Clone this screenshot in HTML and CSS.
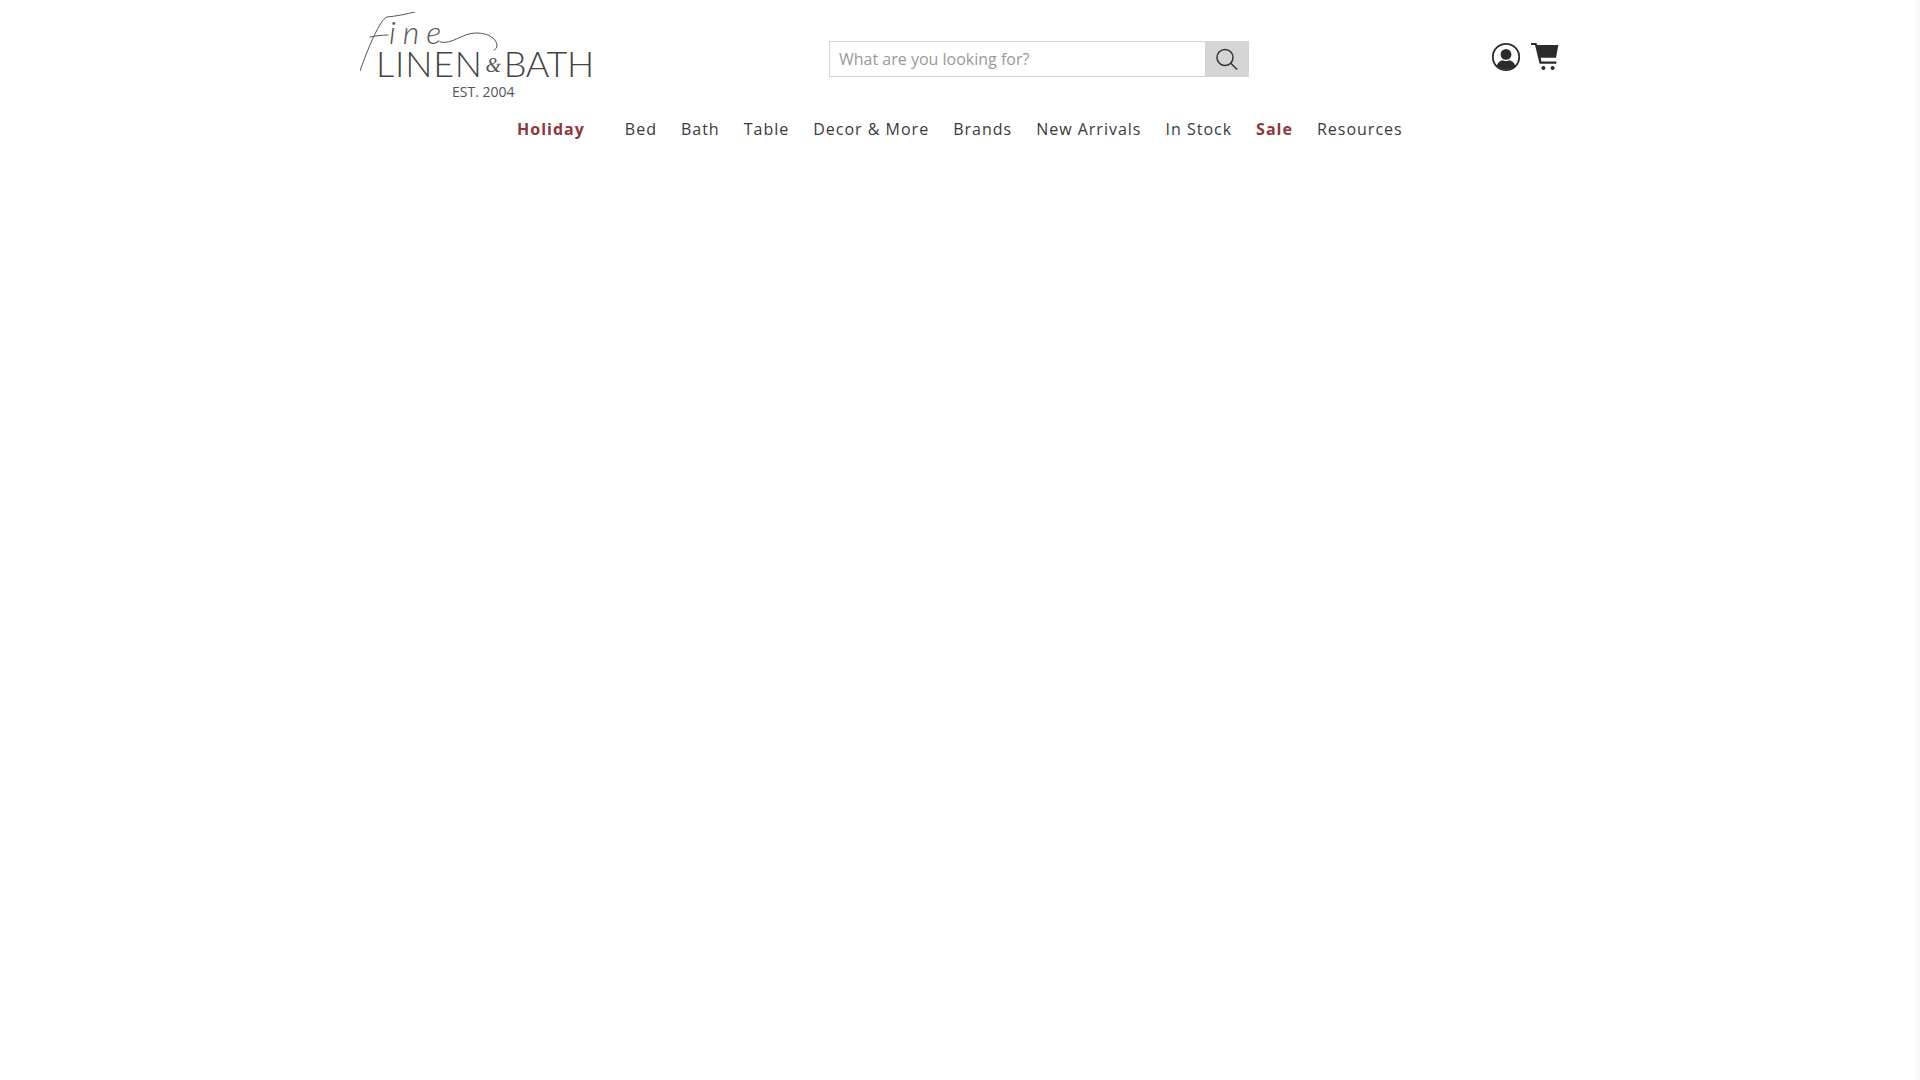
FILE: index.html
```html
<!DOCTYPE html>
<html lang="en">
<head>
  <meta charset="UTF-8">
  <meta name="viewport" content="width=device-width, initial-scale=1.0">
  <title>Fine Linen & Bath</title>
  <link rel="stylesheet" href="styles.css">
</head>
<body>
  <header class="site-header">
    <div class="top-row">
      <a class="logo" href="#">
        <svg class="logo-swash" width="240" height="88" viewBox="0 0 240 88" fill="none" stroke="#555" stroke-width="1" stroke-linecap="round">
          <path d="M0 59 C6 42 13 24 21 11 C23 8 25 6 27 5 C38 4 46 2 55 0"/>
          <path d="M10 25 C16 24 22 23 28 23"/>
          <path d="M80 30 C92 33 102 21 116 21 C128 21 136 26 137 33 C137 36 136 37 134 38"/>
        </svg>
        <span class="logo-fine">ine</span>
        <span class="logo-name"><span>LINEN</span><i class="logo-and">&amp;</i><span class="logo-bath">BATH</span></span>
        <span class="logo-est">EST. 2004</span>
      </a>
      <form class="search">
        <input class="search-input" type="text" placeholder="What are you looking for?">
        <button class="search-button" type="button" aria-label="Search">
          <svg width="22" height="22" viewBox="0 0 22 22" fill="none" stroke="#333" stroke-width="1.5">
            <circle cx="9" cy="9.5" r="8"/>
            <path d="M15 15.5 L20.7 21" stroke-linecap="round"/>
          </svg>
        </button>
      </form>
      <div class="header-icons">
        <a href="#" aria-label="Account">
          <svg width="30" height="30" viewBox="0 0 30 30">
            <circle cx="15" cy="15" r="13.2" fill="none" stroke="#2b2b2b" stroke-width="1.8"/>
            <circle cx="15" cy="12.4" r="5.4" fill="#2b2b2b"/>
            <path d="M5.6 24 C7 19.6 10.5 18.4 12 18.2 C14 19.4 16 19.4 18 18.2 C19.5 18.4 23 19.6 24.4 24 C19 29 11 29 5.6 24 Z" fill="#2b2b2b"/>
          </svg>
        </a>
        <a class="cart-link" href="#" aria-label="Cart">
          <svg width="28" height="28" viewBox="0 0 28 28" fill="#2b2b2b">
            <path d="M0 0 H5.4 L6.2 2 H27.4 L25 14.8 H9.6 L10.4 18.6 H25.4 V20.8 H8.6 L4 2 H0 Z"/>
            <circle cx="12.4" cy="25" r="2"/>
            <circle cx="21.6" cy="25" r="2"/>
          </svg>
        </a>
      </div>
    </div>
    <nav class="main-nav">
      <a class="nav-link nav-holiday" href="#">Holiday</a>
      <a class="nav-link" href="#">Bed</a>
      <a class="nav-link" href="#">Bath</a>
      <a class="nav-link" href="#">Table</a>
      <a class="nav-link" href="#">Decor &amp; More</a>
      <a class="nav-link" href="#">Brands</a>
      <a class="nav-link" href="#">New Arrivals</a>
      <a class="nav-link" href="#">In Stock</a>
      <a class="nav-link nav-sale" href="#">Sale</a>
      <a class="nav-link" href="#">Resources</a>
    </nav>
  </header>
  <div class="edge-shade"></div>
</body>
</html>
```

FILE: styles.css
```css
body {
  font-family: 'Open Sans', sans-serif;
  margin: 0;
  padding: 0;
  background-color: #fff;
  color: #333;
}

a {
  color: inherit;
  text-decoration: none;
}

.site-header {
  width: 1200px;
  margin: 0 auto;
}

.top-row {
  display: flex;
  align-items: flex-start;
  height: 112px;
}

.logo {
  display: block;
  position: relative;
  width: 240px;
  height: 88px;
  margin-top: 12px;
  flex: none;
}

.logo-swash {
  position: absolute;
  top: 0;
  left: 0;
}

.logo-fine {
  position: absolute;
  top: 9px;
  left: 29px;
  font-family: 'Lato', sans-serif;
  font-style: italic;
  font-weight: 300;
  font-size: 32px;
  line-height: 22px;
  letter-spacing: 7px;
  color: #555;
}

.logo-name {
  position: absolute;
  top: 32px;
  left: 16px;
  display: flex;
  align-items: center;
  font-family: 'Lato', sans-serif;
  font-weight: 300;
  font-size: 36px;
  line-height: 34px;
  letter-spacing: 0.8px;
  color: #444;
}

.logo-bath {
  letter-spacing: -0.4px;
}

.logo-and {
  font-family: 'Liberation Serif', serif;
  font-size: 20px;
  letter-spacing: 0;
  margin: 4px 0 0;
  width: 21px;
  text-align: center;
  color: #555;
}

.logo-est {
  position: absolute;
  top: 72px;
  left: 92px;
  font-size: 14px;
  line-height: 16px;
  color: #555;
}

.search {
  display: flex;
  width: 420px;
  height: 36px;
  margin: 41px 0 0 229px;
}

.search-input {
  flex: 1;
  min-width: 0;
  box-sizing: border-box;
  height: 36px;
  padding: 0 9px;
  border: 1px solid #d5d5d5;
  border-right: none;
  border-radius: 0;
  outline: none;
  font-family: inherit;
  font-size: 16px;
  color: #333;
}

.search-input::placeholder {
  color: #999;
  opacity: 1;
}

.search-button {
  display: flex;
  align-items: center;
  justify-content: center;
  width: 44px;
  height: 36px;
  padding: 0;
  border: none;
  background: #d5d5d5;
}

.header-icons {
  display: flex;
  align-items: flex-start;
  gap: 10px;
  margin: 42px 1px 0 auto;
}

.header-icons a {
  display: block;
  height: 30px;
}

.header-icons .cart-link {
  margin-top: 1px;
}

.main-nav {
  display: flex;
  gap: 24px;
  padding-left: 157px;
  height: 34px;
  align-items: center;
  font-size: 16px;
  letter-spacing: 1px;
  color: #3a3a3a;
}

.nav-link {
  white-space: nowrap;
}

.nav-holiday,
.nav-sale {
  font-weight: 700;
  color: #8f363c;
}

.nav-holiday {
  margin-right: 16px;
}

.edge-shade {
  position: fixed;
  top: 0;
  right: 0;
  bottom: 0;
  width: 9px;
  background: linear-gradient(to right, #fff, #f8f8f8);
}
```
